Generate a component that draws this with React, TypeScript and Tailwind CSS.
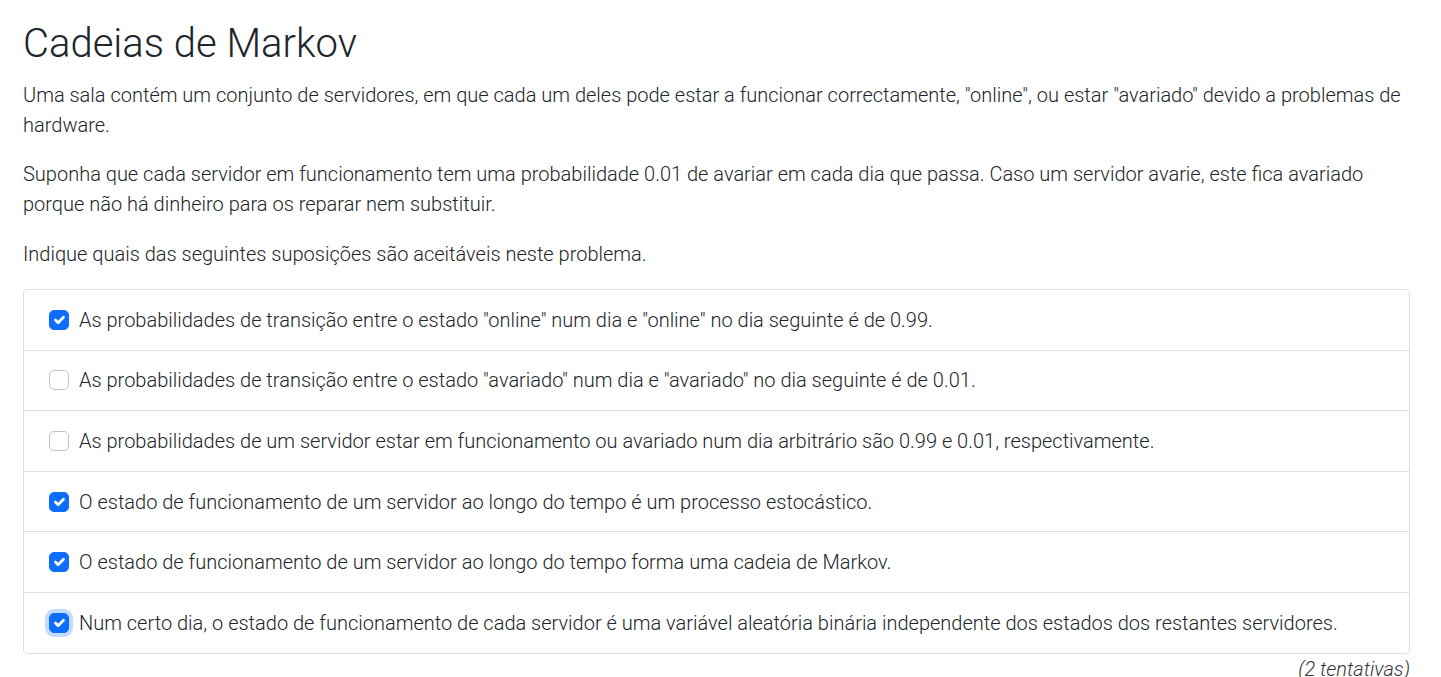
import React from "react";

const items: { text: string; checked: boolean; focus?: boolean }[] = [
  { text: 'As probabilidades de transição entre o estado "online" num dia e "online" no dia seguinte é de 0.99.', checked: true },
  { text: 'As probabilidades de transição entre o estado "avariado" num dia e "avariado" no dia seguinte é de 0.01.', checked: false },
  { text: "As probabilidades de um servidor estar em funcionamento ou avariado num dia arbitrário são 0.99 e 0.01, respectivamente.", checked: false },
  { text: "O estado de funcionamento de um servidor ao longo do tempo é um processo estocástico.", checked: true },
  { text: "O estado de funcionamento de um servidor ao longo do tempo forma uma cadeia de Markov.", checked: true },
  { text: "Num certo dia, o estado de funcionamento de cada servidor é uma variável aleatória binária independente dos estados dos restantes servidores.", checked: true, focus: true },
];

function Check({ checked, focus }: { checked: boolean; focus?: boolean }) {
  return (
    <span
      className={
        "shrink-0 w-[20px] h-[20px] rounded-[5px] flex items-center justify-center " +
        (checked ? "bg-[#0d6efd] border border-[#0d6efd] " : "bg-white border border-[#bfc3c8] ") +
        (focus ? "shadow-[0_0_0_4px_rgba(13,110,253,0.25)]" : "")
      }
    >
      {checked && (
        <svg width="20" height="20" viewBox="0 0 20 20" fill="none">
          <path d="m6 10 3 3 6-6" stroke="#fff" strokeWidth="3" strokeLinecap="round" strokeLinejoin="round" />
        </svg>
      )}
    </span>
  );
}

export default function App() {
  return (
    <div
      className="bg-white min-h-[677px] pl-[23px] pt-[20px] text-[#212529] font-light"
      style={{ fontFamily: "Roboto, 'Liberation Sans', sans-serif" }}
    >
      <div className="w-[1387px]">
        <h1 className="text-[40px] leading-[48px] font-light mb-[12px]">Cadeias de Markov</h1>
        <p className="text-[20px] leading-[30px] mb-[19px]">
          Uma sala contém um conjunto de servidores, em que cada um deles pode estar a funcionar correctamente, "online", ou estar "avariado" devido a problemas de hardware.
        </p>
        <p className="text-[20px] leading-[30px] mb-[20px]">
          Suponha que cada servidor em funcionamento tem uma probabilidade 0.01 de avariar em cada dia que passa. Caso um servidor avarie, este fica avariado porque não há dinheiro para os reparar nem substituir.
        </p>
        <p className="text-[20px] leading-[30px] mb-[20px]">Indique quais das seguintes suposições são aceitáveis neste problema.</p>
        <div className="border border-[#dfdfdf] rounded-[4px] flex flex-col">
          {items.map((it, i) => (
            <div
              key={i}
              className={
                "flex items-center gap-[10px] pl-[25px] pr-4 py-[14.8px] text-[20px] leading-[30px] " +
                (i > 0 ? "border-t border-[#dfdfdf]" : "")
              }
            >
              <Check checked={it.checked} focus={it.focus} />
              <span>{it.text}</span>
            </div>
          ))}
        </div>
        <div className="text-right italic text-[20px] leading-[30px] text-[#333]">(2 tentativas)</div>
      </div>
    </div>
  );
}
